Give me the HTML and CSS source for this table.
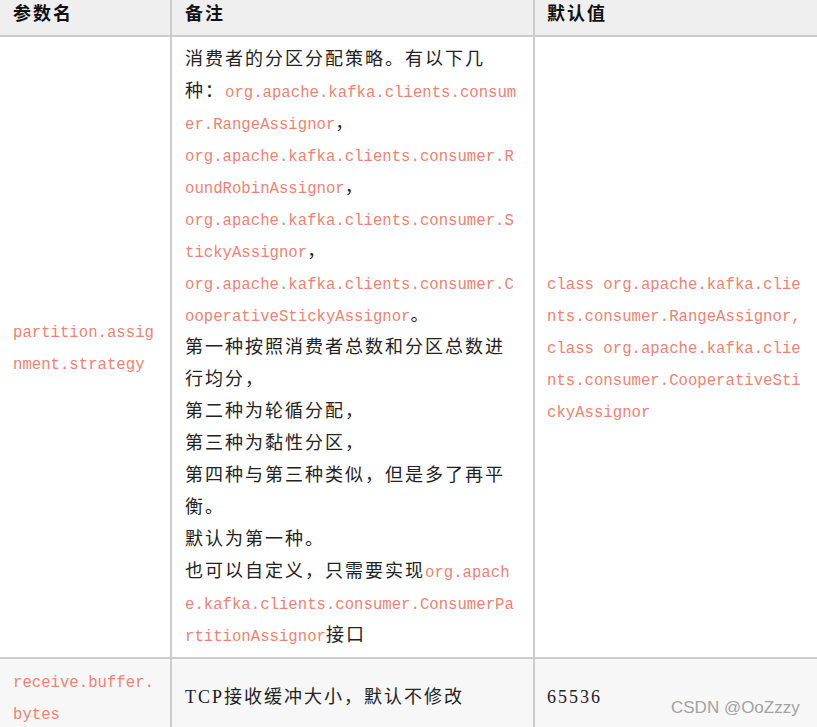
FILE: index.html
```html
<!DOCTYPE html>
<html lang="zh-CN">
<head>
<meta charset="utf-8">
<title>参数表</title>
<link rel="stylesheet" href="styles.css">
</head>
<body>
<table class="params">
  <thead>
    <tr>
      <th class="col-name">参数名</th>
      <th class="col-note">备注</th>
      <th class="col-def">默认值</th>
    </tr>
  </thead>
  <tbody>
    <tr>
      <td class="col-name"><span class="code">partition.assignment.strategy</span></td>
      <td class="col-note">消费者的分区分配策略。有以下几种：<span class="code">org.apache.kafka.clients.consumer.RangeAssignor</span>，<br><span class="code">org.apache.kafka.clients.consumer.RoundRobinAssignor</span>，<br><span class="code">org.apache.kafka.clients.consumer.StickyAssignor</span>，<br><span class="code">org.apache.kafka.clients.consumer.CooperativeStickyAssignor</span>。<br>第一种按照消费者总数和分区总数进行均分，<br>第二种为轮循分配，<br>第三种为黏性分区，<br>第四种与第三种类似，但是多了再平衡。<br>默认为第一种。<br>也可以自定义，只需要实现<span class="code">org.apache.kafka.clients.consumer.ConsumerPartitionAssignor</span>接口</td>
      <td class="col-def"><span class="code">class org.apache.kafka.clients.consumer.RangeAssignor, class org.apache.kafka.clients.consumer.CooperativeStickyAssignor</span></td>
    </tr>
    <tr class="alt">
      <td class="col-name"><span class="code">receive.buffer.bytes</span></td>
      <td class="col-note">TCP接收缓冲大小，默认不修改</td>
      <td class="col-def">65536</td>
    </tr>
  </tbody>
</table>
<div class="watermark">CSDN @OoZzzy</div>
</body>
</html>
```

FILE: styles.css
```css
html, body {
  margin: 0;
  padding: 0;
}

body {
  background: #ffffff;
  font-family: "Liberation Serif", "Noto Sans CJK SC", serif;
  color: #222222;
  overflow: hidden;
}

.params {
  border-collapse: separate;
  border-spacing: 0;
  table-layout: fixed;
  width: 817px;
}

.params th,
.params td {
  box-sizing: border-box;
  padding: 6px 13px;
  font-size: 18px;
  letter-spacing: 2px;
  line-height: 32px;
  text-align: left;
  vertical-align: middle;
  word-break: break-all;
  border-bottom: 2px solid #cccccc;
}

.params th + th,
.params td + td {
  border-left: 2px solid #cccccc;
}

.params th {
  height: 37px;
  padding-top: 0;
  padding-bottom: 6px;
  line-height: 29px;
  font-weight: bold;
  background: #efefef;
  color: #111111;
}

.params .col-name {
  width: 170px;
}

.params .col-note {
  width: 363px;
  padding-right: 15px;
}

.params .col-def {
  width: 284px;
  padding-left: 12px;
  padding-right: 12px;
}

.params tr.alt td {
  background: #f7f7f7;
}

.code {
  font-family: "Liberation Mono", monospace;
  font-size: 15.67px;
  letter-spacing: 0;
  line-height: 20px;
  color: #f4806f;
}

.watermark {
  position: absolute;
  left: 671px;
  top: 698px;
  font-family: "Liberation Sans", Arial, sans-serif;
  font-size: 17px;
  line-height: 20px;
  color: #a2a2a2;
}
```
